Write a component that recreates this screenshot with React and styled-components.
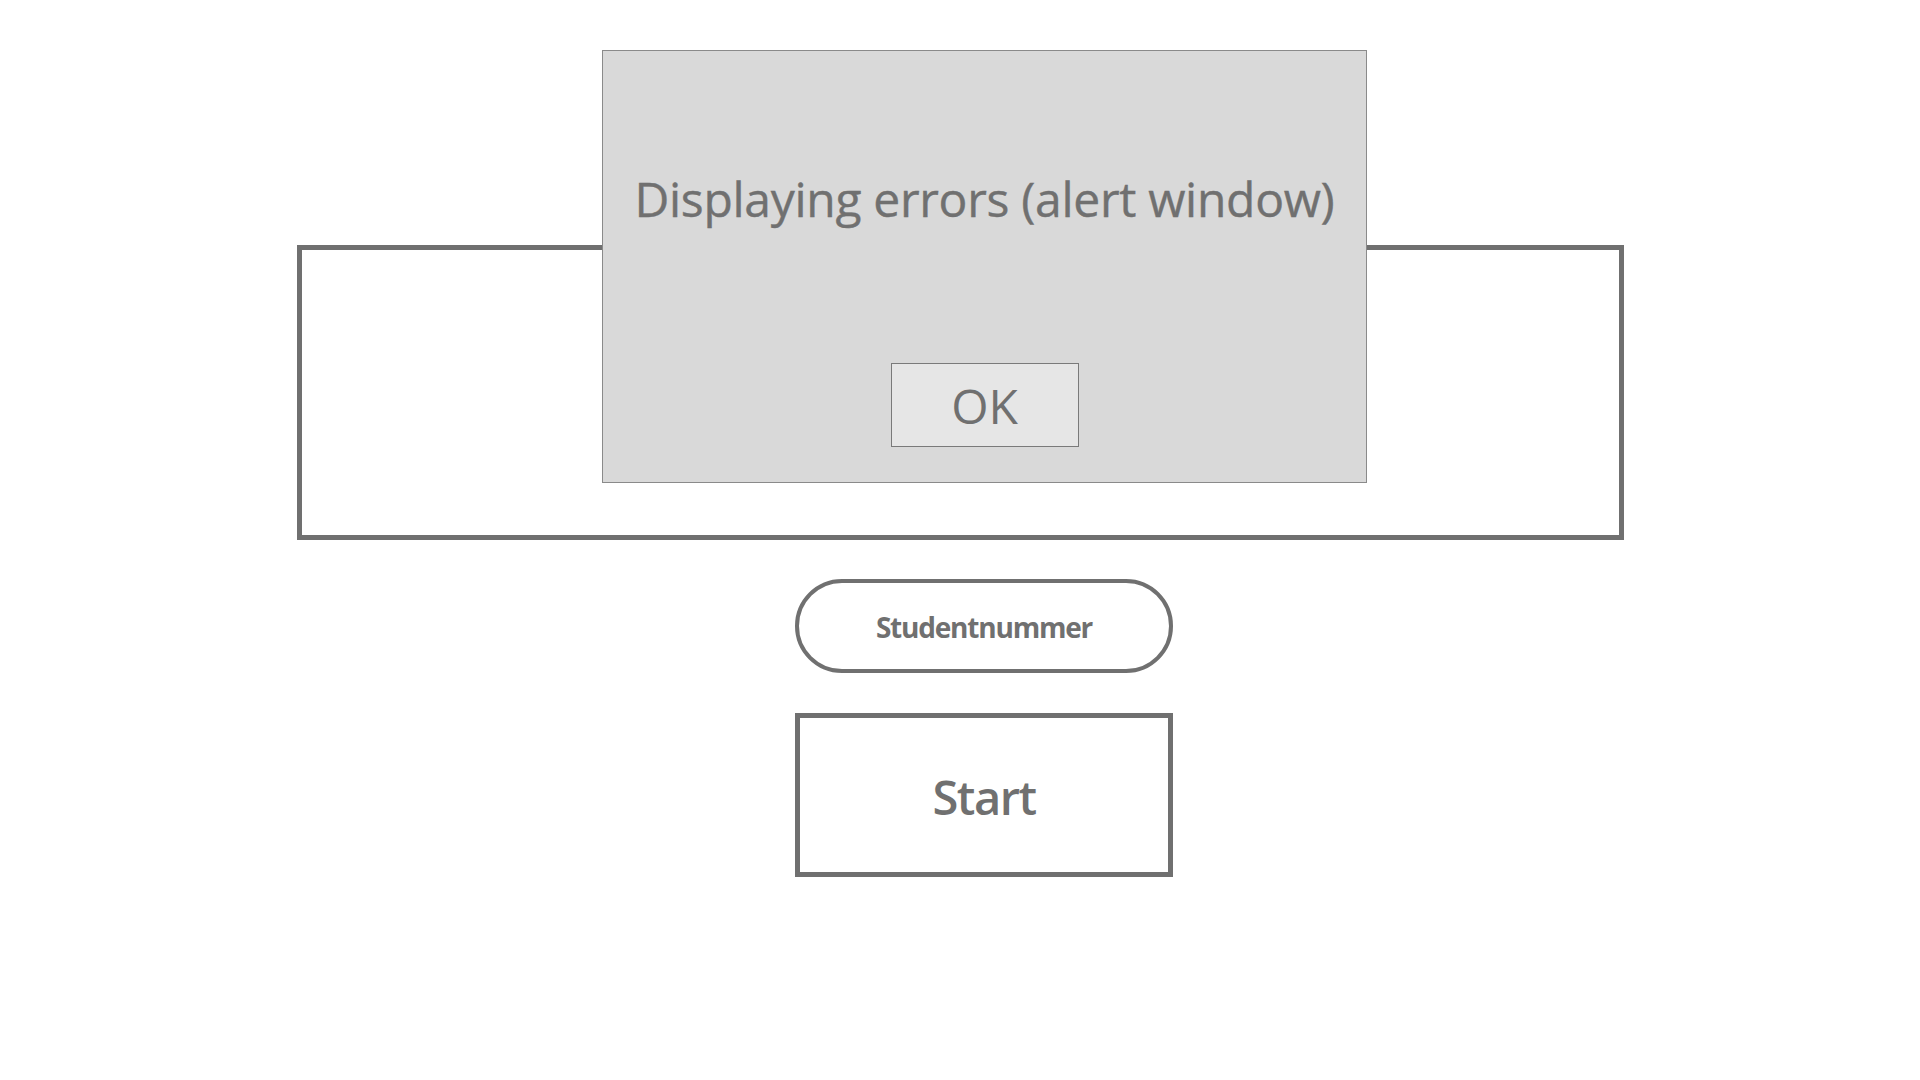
import React from 'react'
import styled, { createGlobalStyle } from 'styled-components'

const GlobalStyle = createGlobalStyle`
  html, body {
    margin: 0;
    padding: 0;
    background: #ffffff;
  }
  body {
    font-family: "Open Sans", "Noto Sans", "Liberation Sans", sans-serif;
    color: #707070;
  }
`

const Page = styled.div`
  position: relative;
  width: 1920px;
  height: 1080px;
  display: flex;
  flex-direction: column;
  padding-top: 245px;
  box-sizing: border-box;
`

const Frame = styled.div`
  margin-left: 297px;
  width: 1327px;
  height: 295px;
  border: 5px solid #707070;
  box-sizing: border-box;
`

const Alert = styled.div`
  position: absolute;
  top: 50px;
  left: 602px;
  width: 765px;
  height: 433px;
  box-sizing: border-box;
  background: #d9d9d9;
  border: 1px solid #8a8a8a;
  display: flex;
  flex-direction: column;
  align-items: center;
  padding-top: 118px;
`

const AlertTitle = styled.div`
  font-size: 48px;
  line-height: 60px;
  letter-spacing: -0.3px;
  color: #707070;
  -webkit-text-stroke: 0.4px #707070;
`

const OkButton = styled.button`
  margin-top: 134px;
  width: 188px;
  height: 84px;
  box-sizing: border-box;
  background: #e6e6e6;
  border: 1px solid #7a7a7a;
  font-family: inherit;
  font-size: 48px;
  color: #707070;
  padding: 0;
  display: flex;
  align-items: center;
  justify-content: center;
`

const Controls = styled.div`
  margin-left: 795px;
  margin-top: 39px;
  width: 378px;
  display: flex;
  flex-direction: column;
  gap: 40px;
`

const Pill = styled.div`
  height: 94px;
  border: ${p => p.$thick}px solid #707070;
  border-radius: 47px;
  box-sizing: border-box;
  display: flex;
  align-items: center;
  justify-content: center;
  font-size: 28px;
  font-weight: 700;
  letter-spacing: -1.2px;
  padding-top: 2px;
`

const StartBox = styled.div`
  height: 164px;
  border: 5px solid #707070;
  box-sizing: border-box;
  display: flex;
  align-items: center;
  justify-content: center;
  font-size: 47px;
  font-weight: 600;
  letter-spacing: -1.5px;
  padding-top: 4px;
`

export default function App() {
  return (
    <>
      <GlobalStyle />
      <Page>
        <Frame />
        <Controls>
          <Pill $thick={4}>Studentnummer</Pill>
          <StartBox>Start</StartBox>
        </Controls>
        <Alert>
          <AlertTitle>Displaying errors (alert window)</AlertTitle>
          <OkButton>OK</OkButton>
        </Alert>
      </Page>
    </>
  )
}
